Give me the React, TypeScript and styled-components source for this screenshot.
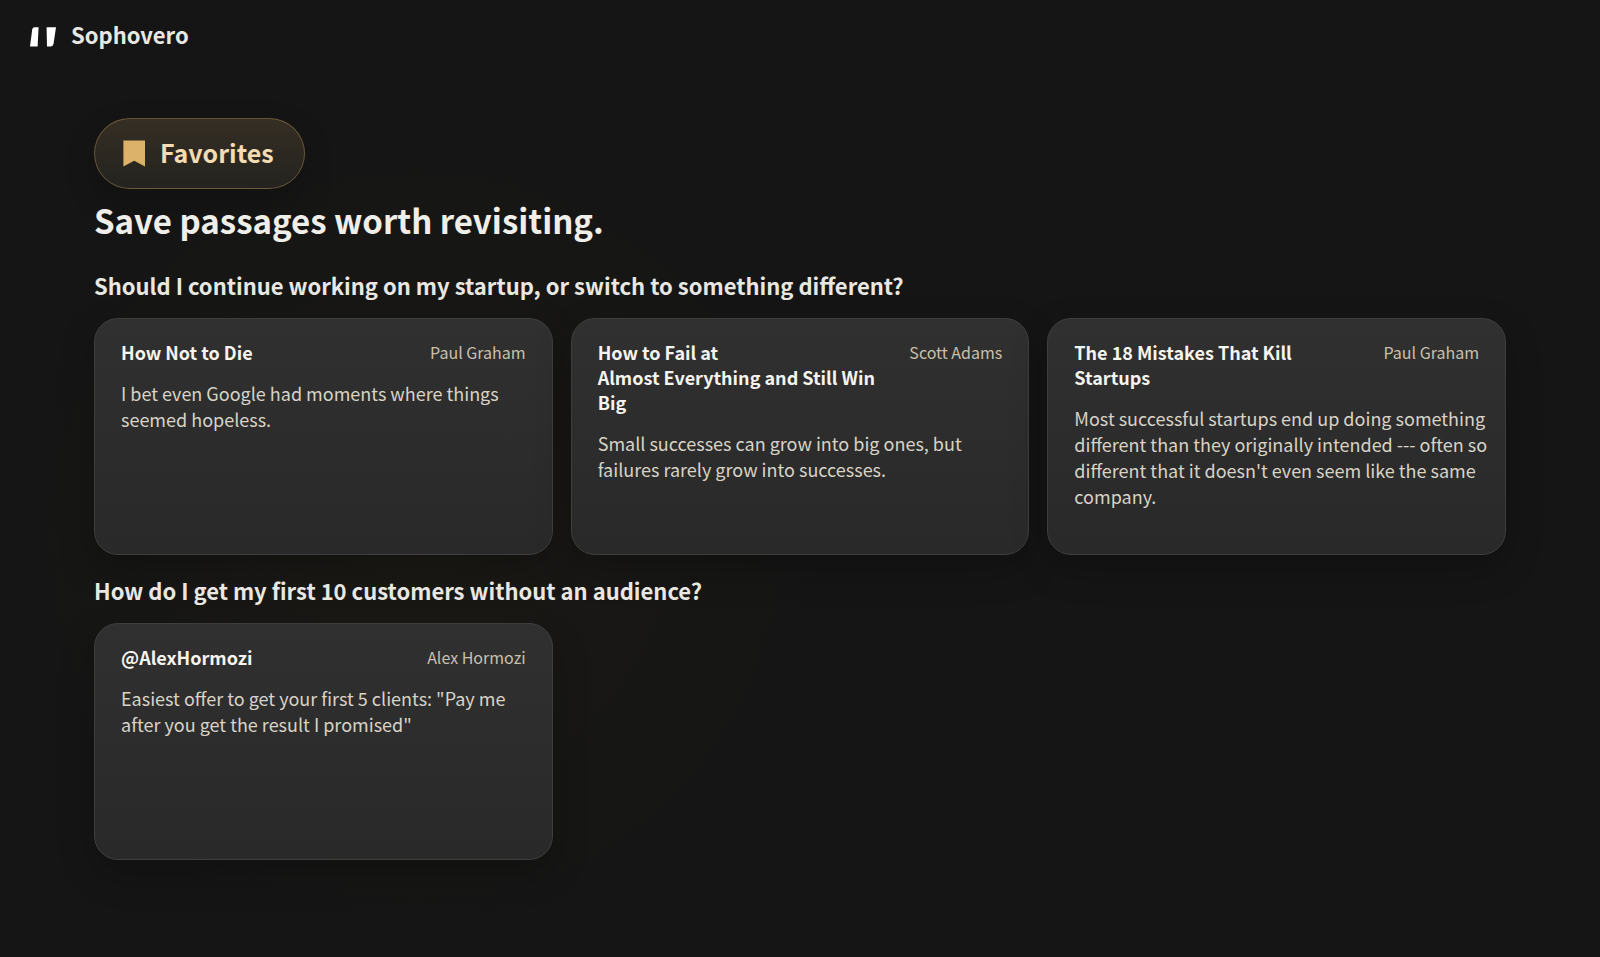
import React from "react";
import styled, { createGlobalStyle } from "styled-components";

const GlobalStyle = createGlobalStyle`
  *, *::before, *::after { box-sizing: border-box; }
  body {
    margin: 0;
    min-height: 100vh;
    color: #f0eee8;
    font-family: "Noto Sans CJK SC", "Noto Sans", sans-serif;
    background:
      radial-gradient(circle at 26% 56%, rgba(120, 96, 20, 0.05), transparent 420px),
      #151515;
  }
  h1, h2, h3, p, ul { margin: 0; padding: 0; }
`;

const Header = styled.header`
  display: flex;
  align-items: center;
  height: 68px;
  padding: 0 30px;
`;

const Brand = styled.a`
  display: flex;
  align-items: center;
  gap: 14px;
  color: #e9e7e2;
  font-size: 22px;
  font-weight: 600;
  line-height: 32px;
  text-decoration: none;
`;

const Main = styled.main`
  display: flex;
  flex-direction: column;
  padding: 50px 94px 96px;
`;

const Badge = styled.p`
  display: flex;
  align-items: center;
  align-self: flex-start;
  gap: 15px;
  height: 71px;
  padding: 0 30px 4px 28px;
  border: 1px solid rgba(219, 176, 98, 0.34);
  border-radius: 36px;
  background: linear-gradient(180deg, #352e24, #24231f);
  box-shadow: 0 12px 32px rgba(0, 0, 0, 0.2);
  color: #f3dcb2;
  font-size: 25px;
  font-weight: 700;
  line-height: 36px;
`;

const PageTitle = styled.h1`
  margin: 7px 0 6px;
  font-size: 33px;
  font-weight: 600;
  line-height: 48px;
`;

const Group = styled.section`
  margin-top: 19px;
`;

const Question = styled.h2`
  color: #e9e7e2;
  font-size: 22px;
  font-weight: 600;
  line-height: 32px;
`;

const CardGrid = styled.ul`
  display: grid;
  grid-template-columns: repeat(3, minmax(0, 1fr));
  gap: 18px;
  margin-top: 17px;
  list-style: none;
`;

const Card = styled.li`
  min-height: 237px;
  padding: 21px 16px 20px 26px;
  border: 1px solid #3e3e3d;
  border-radius: 24px;
  background: linear-gradient(180deg, #303030, #292929);
  box-shadow: 0 14px 36px rgba(0, 0, 0, 0.22);
`;

const CardHead = styled.div`
  display: flex;
  align-items: flex-start;
  justify-content: space-between;
  gap: 16px;
  margin-right: 10px;
`;

const CardTitle = styled.h3`
  color: #f6f4ee;
  font-size: 18px;
  font-weight: 700;
  line-height: 25px;
  white-space: pre-line;
`;

const Author = styled.span`
  flex: none;
  color: #c9c0ab;
  font-size: 16px;
  line-height: 25px;
`;

const Passage = styled.p`
  margin-top: 15px;
  color: #d8d3c6;
  font-size: 18px;
  line-height: 26px;
`;

type Favorite = { title: string; author: string; passage: string };

const groups: { question: string; items: Favorite[] }[] = [
  {
    question: "Should I continue working on my startup, or switch to something different?",
    items: [
      {
        title: "How Not to Die",
        author: "Paul Graham",
        passage: "I bet even Google had moments where things seemed hopeless.",
      },
      {
        title: "How to Fail at\nAlmost Everything and Still Win Big",
        author: "Scott Adams",
        passage: "Small successes can grow into big ones, but failures rarely grow into successes.",
      },
      {
        title: "The 18 Mistakes That Kill Startups",
        author: "Paul Graham",
        passage:
          "Most successful startups end up doing something different than they originally intended --- often so different that it doesn't even seem like the same company.",
      },
    ],
  },
  {
    question: "How do I get my first 10 customers without an audience?",
    items: [
      {
        title: "@AlexHormozi",
        author: "Alex Hormozi",
        passage: 'Easiest offer to get your first 5 clients: "Pay me after you get the result I promised"',
      },
    ],
  },
];

const QuoteLogo = () => (
  <svg width="27" height="26" viewBox="0 0 27 26" fill="#fff" aria-hidden="true">
    <path d="M2.2 8.6Q2.6 6.2 4.6 6.2H8.6L7.6 25.6H0Z" />
    <path d="M16.6 6.2H26L23.6 22.6Q23.1 25.4 20.6 25.6H17Z" />
  </svg>
);

const BookmarkIcon = () => (
  <svg width="22" height="30" viewBox="0 0 22 30" fill="#dcb169" aria-hidden="true">
    <path d="M0.4 3.5H22V29.5L11.2 23.8L0.4 29.5Z" />
  </svg>
);

export default function App() {
  return (
    <>
      <GlobalStyle />
      <Header>
        <Brand href="#">
          <QuoteLogo />
          Sophovero
        </Brand>
      </Header>
      <Main>
        <Badge>
          <BookmarkIcon />
          Favorites
        </Badge>
        <PageTitle>Save passages worth revisiting.</PageTitle>
        {groups.map((group) => (
          <Group key={group.question}>
            <Question>{group.question}</Question>
            <CardGrid>
              {group.items.map((item) => (
                <Card key={item.title}>
                  <CardHead>
                    <CardTitle>{item.title}</CardTitle>
                    <Author>{item.author}</Author>
                  </CardHead>
                  <Passage>{item.passage}</Passage>
                </Card>
              ))}
            </CardGrid>
          </Group>
        ))}
      </Main>
    </>
  );
}
